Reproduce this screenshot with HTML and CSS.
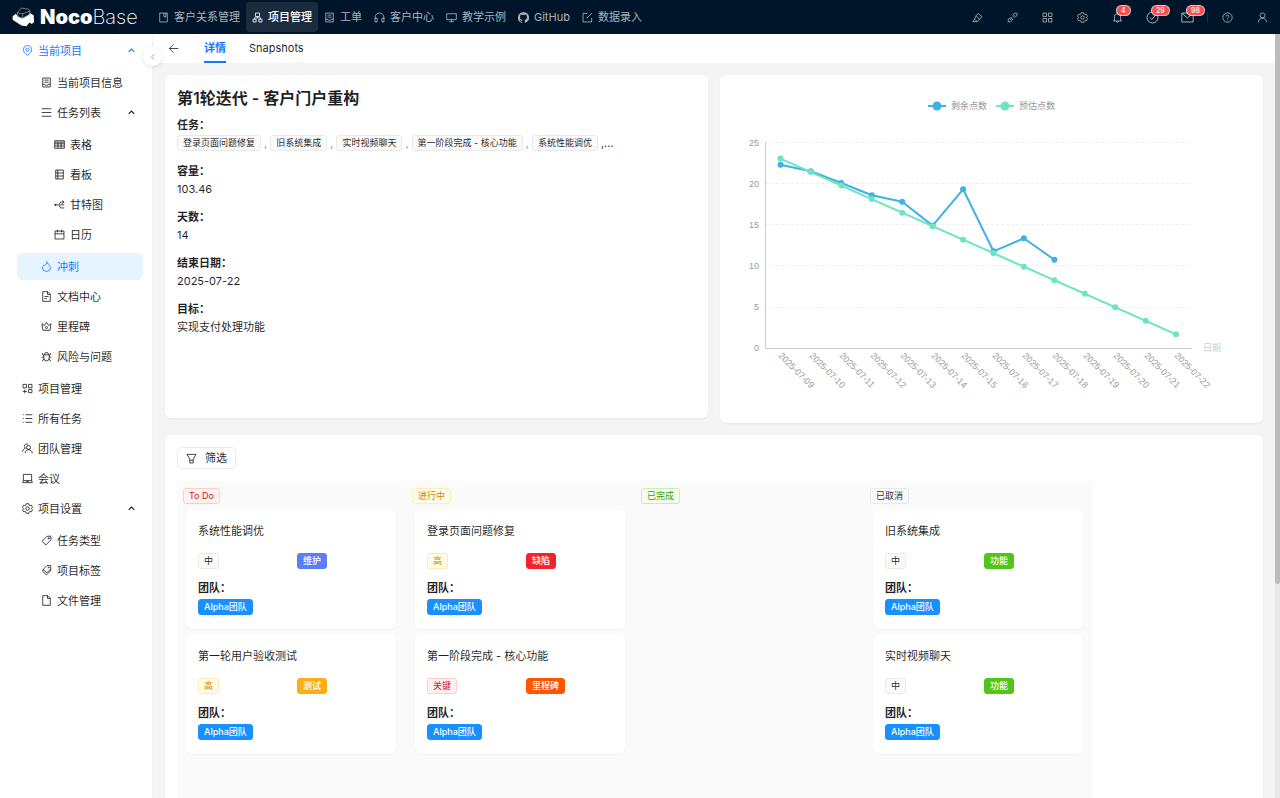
FILE: index.html
```html
<!DOCTYPE html>
<html lang="zh-CN">
<head>
<meta charset="utf-8">
<title>NocoBase</title>
<link rel="stylesheet" href="styles.css">
</head>
<body>
<svg class="sprite" aria-hidden="true">
  <symbol id="i-book" viewBox="0 0 16 16"><path d="M2.500 1.500h11v13h-11zM8.500 1.500v5.500h3v-5.500"/></symbol>
  <symbol id="i-tree" viewBox="0 0 16 16"><path d="M5 1.500h6v5H5zM1.500 10.500h4.500v4H1.500zM10 10.500h4.500v4H10zM8 6.500v2M3.800 10.500v-2h8.400v2"/></symbol>
  <symbol id="i-form" viewBox="0 0 16 16"><path d="M2.500 1.500h11v13h-11zM5 4.500h6M5 7.500h6M2.500 10.500h3l1 1.500h3l1-1.500h3"/></symbol>
  <symbol id="i-headset" viewBox="0 0 16 16"><path d="M1.500 10V8a6.500 6.500 0 0 1 13 0v2M1.500 9h3v5.500h-3zM14.500 9h-3v5.500h3z"/></symbol>
  <symbol id="i-screen" viewBox="0 0 16 16"><path d="M1 2.500h14v8.500H1zM8 11v3M4.500 14h7"/></symbol>
  <symbol id="i-github" viewBox="0 0 16 16"><path class="solid" d="M8 .2a8 8 0 0 0-2.500 15.600c.4.100.5-.2.500-.4v-1.400c-2.200.5-2.700-1-2.700-1-.4-.9-.9-1.200-.9-1.200-.7-.5.1-.5.1-.5.8.1 1.200.8 1.200.8.7 1.200 1.900.9 2.300.7.1-.5.3-.9.5-1.100-1.800-.2-3.600-.9-3.600-4 0-.9.300-1.600.8-2.100-.1-.2-.4-1 .1-2.100 0 0 .7-.2 2.200.8a7.500 7.500 0 0 1 4 0c1.500-1 2.200-.8 2.200-.8.4 1.100.2 1.900.1 2.100.5.6.8 1.300.8 2.100 0 3.100-1.900 3.800-3.700 4 .3.300.6.800.6 1.500v2.200c0 .2.100.5.600.4A8 8 0 0 0 8 .2z"/></symbol>
  <symbol id="i-edit" viewBox="0 0 16 16"><path d="M8 2H1.500v12.500H14V8.500M14.500 1.500L8 8v.5H6.500"/></symbol>
  <symbol id="i-brush" viewBox="0 0 16 16"><path d="M9 2l5.500 5L11 10.500c-1 2-2 3-4 3.500H1l3-3.500c.5-2 1-3.500 2-5zM6 5.500l5 5M4 10.500L7.500 14"/></symbol>
  <symbol id="i-plug" viewBox="0 0 16 16"><path d="M9 3.500l3.500 3.500c2-1 2.500-3 1.500-4.500s-3.500-1-5 1zM3.500 9L7 12.500c-1 2-3 2.500-4.500 1.500s-1-3.500 1-5zM13.700 2.300L15 1M2.300 13.700L1 15M5.500 9.500L7 8M7.500 11.500L9 10M7.500 5L11 8.500M5 7.500L8.500 11"/></symbol>
  <symbol id="i-grid" viewBox="0 0 16 16"><path d="M1.500 1.500h5v5h-5zM9.500 1.500h5v5h-5zM1.500 9.500h5v5h-5zM9.500 9.500h5v5h-5z"/></symbol>
  <symbol id="i-gear" viewBox="0 0 16 16"><path d="M6.300 1h3.400l.6 2 1.200.7 2.100-.5 1.700 2.900L13.800 7.600v.9l1.500 1.500-1.700 2.900-2.100-.5-1.200.7-.6 2H6.300l-.6-2-1.200-.7-2.100.5L.7 10l1.500-1.500v-.9L.7 6.100l1.700-2.900 2.100.5 1.200-.7z"/><circle cx="8" cy="8" r="2.500"/></symbol>
  <symbol id="i-bell" viewBox="0 0 16 16"><path d="M1.500 13h13M3.500 13V7a4.500 4.500 0 0 1 9 0v6M8 2.500V1M6.500 13.500a1.500 1.500 0 0 0 3 0"/></symbol>
  <symbol id="i-check" viewBox="0 0 16 16"><circle cx="8" cy="8" r="6.800"/><path d="M5 8l2.200 2.500L11.500 5.500"/></symbol>
  <symbol id="i-mail" viewBox="0 0 16 16"><path d="M1 2.500h14v11H1zM1.500 3L8 8.500 14.500 3"/></symbol>
  <symbol id="i-help" viewBox="0 0 16 16"><circle cx="8" cy="8" r="6.800"/><path d="M6 6.500C6 3.800 10 3.800 10 6.400 10 8 8 8 8 9.700M8 11v1.200"/></symbol>
  <symbol id="i-user" viewBox="0 0 16 16"><circle cx="8" cy="5" r="3.600"/><path d="M2 15c0-8 12-8 12 0"/></symbol>
  <symbol id="i-pin" viewBox="0 0 16 16"><path d="M8 15C4 12 2 9.500 2 6.700a6 6 0 0 1 12 0C14 9.500 12 12 8 15z"/><circle cx="8" cy="6.800" r="2.300"/></symbol>
  <symbol id="i-bars" viewBox="0 0 16 16"><path d="M1 2.500h14M1 8h14M1 13.500h14"/></symbol>
  <symbol id="i-table" viewBox="0 0 16 16"><path d="M1 2.500h14v11H1zM1 4.500h14M1 7h14M1 10.200h14M5.700 5v8.500M10.300 5v8.500"/></symbol>
  <symbol id="i-board" viewBox="0 0 16 16"><path d="M2.500 1.500h11v13h-11zM2.500 5.800h11M2.500 10.200h11M5.500 1.500v13"/></symbol>
  <symbol id="i-gantt" viewBox="0 0 16 16"><path d="M1 8.500h5M15 8.500H8M15 13H9.500L7 8.500 9.500 4.500H14M12 2l2.500 2.500L12 7"/><circle class="solid" cx="2" cy="8.500" r="1.400"/></symbol>
  <symbol id="i-calendar" viewBox="0 0 16 16"><path d="M1.500 3h13v11.500h-13zM1.500 7h13M5 1v4M11 1v4"/></symbol>
  <symbol id="i-fire" viewBox="0 0 16 16"><path d="M8 1c.5 2.500-1 4-2.500 5.500L4.500 5.500C3 7 2.200 8.500 2.200 9.800a5.800 5.300 0 0 0 11.600 0C13.800 7 11.500 6 10.500 4.500 10 3.500 9.500 2 8 1z"/></symbol>
  <symbol id="i-doc" viewBox="0 0 16 16"><path d="M2.500 1h7.500l3.500 3.500V15h-11zM9.500 1v4h4M5 8h6M5 11h3.500"/></symbol>
  <symbol id="i-crown" viewBox="0 0 16 16"><path d="M1.500 4L5 6.500 8 2l3 4.500L14.500 4l-1.300 9.500H2.800z"/><circle cx="8" cy="9.500" r="1.500"/></symbol>
  <symbol id="i-bug" viewBox="0 0 16 16"><path d="M4 5.500h8V10a4 4.500 0 0 1-8 0zM5 5.500a3 3.500 0 0 1 6 0M1 9h3M12 9h3M4 6.500L2 5V3M12 6.500L14 5V3M4.500 11.500L2.500 13v2M11.500 11.500l2 1.500v2"/></symbol>
  <symbol id="i-addgrid" viewBox="0 0 16 16"><path d="M1.500 2h5v5h-5zM9.500 2h5v5h-5zM9.500 9.500h5v4.500h-5zM4 9.500V15M1 12.200h6"/></symbol>
  <symbol id="i-list" viewBox="0 0 16 16"><path d="M5 2.500h10M5 8h10M5 13.500h10M1 2.500h1.500M1 8h1.500M1 13.500h1.500"/></symbol>
  <symbol id="i-team" viewBox="0 0 16 16"><circle cx="9.500" cy="6.500" r="2.900"/><path d="M4.500 15c0-7 10-7 10.500 0M6.500 7.800A3.200 3.200 0 1 1 9 2.500M1 12.500c0-2.500 1.500-4 3.500-4.700"/></symbol>
  <symbol id="i-laptop" viewBox="0 0 16 16"><path d="M2 2h12v9H2zM2 11l-1 3h14l-1-3M6 12.500h4"/></symbol>
  <symbol id="i-tag" viewBox="0 0 16 16"><path d="M8.500 2l5.700-.5.300 5.500-7.500 7.500L1.500 9z"/><circle cx="11.300" cy="4.800" r="1"/></symbol>
  <symbol id="i-tags" viewBox="0 0 16 16"><path d="M8.500 1l5.500-.3.300 5L8.500 11.500 3 6.500zM3 6.500L2.500 9.500l5.500 5 6-6V5.700"/><circle cx="11.300" cy="3.800" r=".7"/></symbol>
  <symbol id="i-file" viewBox="0 0 16 16"><path d="M2.500 1h7.500l3.500 3.500V15h-11zM9.500 1v4h4"/></symbol>
  <symbol id="i-up" viewBox="0 0 16 16"><path d="M3 10.500L8 5.500l5 5"/></symbol>
  <symbol id="i-left" viewBox="0 0 16 16"><path d="M10.500 2.500L5 8l5.500 5.500"/></symbol>
  <symbol id="i-back" viewBox="0 0 16 16"><path d="M15 8H2M8 2L2 8l6 6"/></symbol>
  <symbol id="i-filter" viewBox="0 0 16 16"><path d="M1.500 2h13L10.500 9v5.500h-5V9zM5.500 10.500h5"/></symbol>
</svg>

<header class="topbar">
  <a class="logo" href="#">
    <svg class="logo-mark" viewBox="34 20 70 60" aria-hidden="true">
      <path class="logo-body" d="M36 48l10-8 6 9 14 5 18-9 4-7 12 7 1 20-7 6-7-4-9 11-15-2-17-11-10-7z"/>
      <path class="logo-line" d="M52 48l-2-11 12-14 22 3 5 6-2 10-22 12zM50 37l17 3 22-8M67 40l-2 14"/>
    </svg>
    <span class="logo-text"><b>Noco</b>Base</span>
  </a>
  <nav class="topnav">
    <a href="#"><svg class="ic"><use href="#i-book"/></svg>客户关系管理</a>
    <a href="#" class="active"><svg class="ic"><use href="#i-tree"/></svg>项目管理</a>
    <a href="#"><svg class="ic"><use href="#i-form"/></svg>工单</a>
    <a href="#"><svg class="ic"><use href="#i-headset"/></svg>客户中心</a>
    <a href="#"><svg class="ic"><use href="#i-screen"/></svg>教学示例</a>
    <a href="#"><svg class="ic"><use href="#i-github"/></svg>GitHub</a>
    <a href="#"><svg class="ic"><use href="#i-edit"/></svg>数据录入</a>
  </nav>
  <div class="tools">
    <button type="button" aria-label="界面配置"><svg class="ic"><use href="#i-brush"/></svg></button>
    <button type="button" aria-label="插件"><svg class="ic"><use href="#i-plug"/></svg></button>
    <button type="button" aria-label="应用"><svg class="ic"><use href="#i-grid"/></svg></button>
    <button type="button" aria-label="设置"><svg class="ic"><use href="#i-gear"/></svg></button>
    <button type="button" aria-label="通知"><svg class="ic"><use href="#i-bell"/></svg><span class="badge">4</span></button>
    <button type="button" aria-label="待办"><svg class="ic big"><use href="#i-check"/></svg><span class="badge">29</span></button>
    <button type="button" aria-label="邮件"><svg class="ic big"><use href="#i-mail"/></svg><span class="badge">98</span></button>
    <span class="divider"></span>
    <button type="button" aria-label="帮助"><svg class="ic"><use href="#i-help"/></svg></button>
    <button type="button" aria-label="用户"><svg class="ic"><use href="#i-user"/></svg></button>
  </div>
</header>

<div class="shell">
  <aside class="sidebar">
    <ul class="menu">
      <li><a href="#" class="current"><svg class="ic"><use href="#i-pin"/></svg>当前项目<svg class="ic chev"><use href="#i-up"/></svg></a>
        <ul class="menu level-1">
          <li><a href="#"><svg class="ic"><use href="#i-form"/></svg>当前项目信息</a></li>
          <li><a href="#"><svg class="ic"><use href="#i-bars"/></svg>任务列表<svg class="ic chev"><use href="#i-up"/></svg></a>
            <ul class="menu level-2">
              <li><a href="#"><svg class="ic"><use href="#i-table"/></svg>表格</a></li>
              <li><a href="#"><svg class="ic"><use href="#i-board"/></svg>看板</a></li>
              <li><a href="#"><svg class="ic"><use href="#i-gantt"/></svg>甘特图</a></li>
              <li><a href="#"><svg class="ic"><use href="#i-calendar"/></svg>日历</a></li>
            </ul>
          </li>
          <li><a href="#" class="current selected"><svg class="ic"><use href="#i-fire"/></svg>冲刺</a></li>
          <li><a href="#"><svg class="ic"><use href="#i-doc"/></svg>文档中心</a></li>
          <li><a href="#"><svg class="ic"><use href="#i-crown"/></svg>里程碑</a></li>
          <li><a href="#"><svg class="ic"><use href="#i-bug"/></svg>风险与问题</a></li>
        </ul>
      </li>
      <li><a href="#"><svg class="ic"><use href="#i-addgrid"/></svg>项目管理</a></li>
      <li><a href="#"><svg class="ic"><use href="#i-list"/></svg>所有任务</a></li>
      <li><a href="#"><svg class="ic"><use href="#i-team"/></svg>团队管理</a></li>
      <li><a href="#"><svg class="ic"><use href="#i-laptop"/></svg>会议</a></li>
      <li><a href="#"><svg class="ic"><use href="#i-gear"/></svg>项目设置<svg class="ic chev"><use href="#i-up"/></svg></a>
        <ul class="menu level-1">
          <li><a href="#"><svg class="ic"><use href="#i-tag"/></svg>任务类型</a></li>
          <li><a href="#"><svg class="ic"><use href="#i-tags"/></svg>项目标签</a></li>
          <li><a href="#"><svg class="ic"><use href="#i-file"/></svg>文件管理</a></li>
        </ul>
      </li>
    </ul>
    <button type="button" class="collapse" aria-label="收起菜单"><svg class="ic"><use href="#i-left"/></svg></button>
  </aside>

  <main class="main">
    <div class="pagehead">
      <a href="#" class="back" aria-label="返回"><svg class="ic"><use href="#i-back"/></svg></a>
      <a href="#" class="tab on">详情</a>
      <a href="#" class="tab">Snapshots</a>
    </div>

    <div class="content">
      <div class="row">
        <section class="card detail">
          <h1>第1轮迭代 - 客户门户重构</h1>
          <dl>
            <dt>任务：</dt>
            <dd class="taglist"><span class="tag">登录页面问题修复</span><i>,</i><span class="tag">旧系统集成</span><i>,</i><span class="tag">实时视频聊天</span><i>,</i><span class="tag">第一阶段完成 - 核心功能</span><i>,</i><span class="tag">系统性能调优</span><i class="more">,...</i></dd>
            <dt>容量：</dt><dd>103.46</dd>
            <dt>天数：</dt><dd>14</dd>
            <dt>结束日期：</dt><dd>2025-07-22</dd>
            <dt>目标：</dt><dd>实现支付处理功能</dd>
          </dl>
        </section>

        <section class="card chart">
          <svg viewBox="0 0 543 348" role="img" aria-label="燃尽图">
            <g class="remain"><path d="M208 31h18"/><circle cx="217" cy="31" r="4.500"/></g>
            <text x="231" y="34">剩余点数</text>
            <g class="plan"><path d="M276 31h18"/><circle cx="285" cy="31" r="4.500"/></g>
            <text x="299" y="34">预估点数</text>
            <path class="split" d="M46 67.500h426M46 108.500h426M46 149.500h426M46 190.500h426M46 232.500h426"/>
            <path class="axis" d="M45.500 67v206.500H472"/>
            <g class="ylab">
              <text x="39" y="71">25</text><text x="39" y="112">20</text><text x="39" y="153">15</text>
              <text x="39" y="194">10</text><text x="39" y="235">5</text><text x="39" y="276">0</text>
            </g>
            <text class="xname" x="483" y="276">日期</text>
            <g class="xlab">
              <text transform="translate(60 279) rotate(45)">2025-07-09</text>
              <text transform="translate(91 279) rotate(45)">2025-07-10</text>
              <text transform="translate(121 279) rotate(45)">2025-07-11</text>
              <text transform="translate(152 279) rotate(45)">2025-07-12</text>
              <text transform="translate(182 279) rotate(45)">2025-07-13</text>
              <text transform="translate(213 279) rotate(45)">2025-07-14</text>
              <text transform="translate(243 279) rotate(45)">2025-07-15</text>
              <text transform="translate(274 279) rotate(45)">2025-07-16</text>
              <text transform="translate(304 279) rotate(45)">2025-07-17</text>
              <text transform="translate(334 279) rotate(45)">2025-07-18</text>
              <text transform="translate(365 279) rotate(45)">2025-07-19</text>
              <text transform="translate(395 279) rotate(45)">2025-07-20</text>
              <text transform="translate(426 279) rotate(45)">2025-07-21</text>
              <text transform="translate(456 279) rotate(45)">2025-07-22</text>
            </g>
            <g class="remain">
              <path d="M60.500 89.700L90.900 96.300 121.300 108 151.800 120.300 182.200 126.700 212.600 150.600 243.100 114.300 273.500 176.300 303.900 163.300 334.400 184.800"/>
              <circle cx="60.500" cy="89.700" r="3"/><circle cx="90.900" cy="96.300" r="3"/><circle cx="121.300" cy="108" r="3"/><circle cx="151.800" cy="120.300" r="3"/><circle cx="182.200" cy="126.700" r="3"/><circle cx="212.600" cy="150.600" r="3"/><circle cx="243.100" cy="114.300" r="3"/><circle cx="273.500" cy="176.300" r="3"/><circle cx="303.900" cy="163.300" r="3"/><circle cx="334.400" cy="184.800" r="3"/>
            </g>
            <g class="plan">
              <path d="M60.500 83.600L456.100 259.300"/>
              <circle cx="60.500" cy="83.600" r="3"/><circle cx="90.900" cy="97.100" r="3"/><circle cx="121.300" cy="110.600" r="3"/><circle cx="151.800" cy="124.100" r="3"/><circle cx="182.200" cy="137.700" r="3"/><circle cx="212.600" cy="151.200" r="3"/><circle cx="243.100" cy="164.700" r="3"/><circle cx="273.500" cy="178.200" r="3"/><circle cx="303.900" cy="191.700" r="3"/><circle cx="334.400" cy="205.300" r="3"/><circle cx="364.800" cy="218.800" r="3"/><circle cx="395.200" cy="232.300" r="3"/><circle cx="425.700" cy="245.800" r="3"/><circle cx="456.100" cy="259.300" r="3"/>
            </g>
          </svg>
        </section>
      </div>

      <section class="card tasks">
        <button type="button" class="filter"><svg class="ic"><use href="#i-filter"/></svg>筛选</button>
        <div class="board">
          <div class="column">
            <span class="tag red">To Do</span>
            <article class="task">
              <h2>系统性能调优</h2>
              <div class="pair"><span class="tag">中</span><span class="tag fill indigo">维护</span></div>
              <h3>团队：</h3><span class="tag fill blue">Alpha团队</span>
            </article>
            <article class="task">
              <h2>第一轮用户验收测试</h2>
              <div class="pair"><span class="tag gold">高</span><span class="tag fill amber">测试</span></div>
              <h3>团队：</h3><span class="tag fill blue">Alpha团队</span>
            </article>
          </div>
          <div class="column">
            <span class="tag gold">进行中</span>
            <article class="task">
              <h2>登录页面问题修复</h2>
              <div class="pair"><span class="tag gold">高</span><span class="tag fill crimson">缺陷</span></div>
              <h3>团队：</h3><span class="tag fill blue">Alpha团队</span>
            </article>
            <article class="task">
              <h2>第一阶段完成 - 核心功能</h2>
              <div class="pair"><span class="tag red">关键</span><span class="tag fill orange">里程碑</span></div>
              <h3>团队：</h3><span class="tag fill blue">Alpha团队</span>
            </article>
          </div>
          <div class="column">
            <span class="tag green">已完成</span>
          </div>
          <div class="column">
            <span class="tag">已取消</span>
            <article class="task">
              <h2>旧系统集成</h2>
              <div class="pair"><span class="tag">中</span><span class="tag fill lime">功能</span></div>
              <h3>团队：</h3><span class="tag fill blue">Alpha团队</span>
            </article>
            <article class="task">
              <h2>实时视频聊天</h2>
              <div class="pair"><span class="tag">中</span><span class="tag fill lime">功能</span></div>
              <h3>团队：</h3><span class="tag fill blue">Alpha团队</span>
            </article>
          </div>
        </div>
      </section>
    </div>
  </main>
  <div class="scrolltrack"><div class="scrollthumb"></div></div>
</div>
</body>
</html>
```

FILE: styles.css
```css
* { box-sizing: border-box; }

body {
  margin: 0;
  height: 100vh;
  display: flex;
  flex-direction: column;
  overflow: hidden;
  font: 11px/18px Inter, "Noto Sans CJK SC", sans-serif;
  color: rgba(0, 0, 0, 0.88);
  background: #f4f4f4;
}

a { color: inherit; text-decoration: none; }
button { font: inherit; color: inherit; cursor: pointer; }
h1, h2, h3, dl, dd, ul { margin: 0; padding: 0; }
ul { list-style: none; }

.sprite { display: none; }
.ic {
  width: 11px;
  height: 11px;
  flex: none;
  fill: none;
  stroke: currentColor;
  stroke-width: 1.2;
}
.ic.big { width: 13px; height: 13px; }
.solid { fill: currentColor; stroke: none; }

/* Top bar */
.topbar {
  flex: none;
  height: 34px;
  display: flex;
  align-items: center;
  background: #001529;
  color: rgba(255, 255, 255, 0.68);
}
.logo {
  width: 152px;
  padding-left: 12px;
  display: flex;
  align-items: center;
  gap: 5px;
  color: #fff;
}
.logo-mark { width: 23px; height: 20px; }
.logo-body { fill: #fff; }
.logo-line { fill: #001529; stroke: #a5adb5; stroke-width: 2; }
.logo-text { font-size: 20px; font-weight: 200; line-height: 34px; }
.logo-text b { font-weight: 900; }
.topnav { display: flex; align-items: center; }
.topnav a {
  height: 30px;
  padding: 0 6px;
  display: flex;
  align-items: center;
  gap: 5px;
  border-radius: 4px;
}
.topnav .active { color: #fff; font-weight: 500; background: rgba(255, 255, 255, 0.1); }
.tools { margin-left: auto; display: flex; align-items: center; }
.tools button {
  position: relative;
  width: 35px;
  height: 34px;
  padding: 0;
  border: 0;
  background: none;
  display: flex;
  align-items: center;
  justify-content: center;
}
.badge {
  position: absolute;
  top: 6px;
  left: 17px;
  height: 9px;
  padding: 0 4px;
  border-radius: 5px;
  background: #ff4d4f;
  box-shadow: 0 0 0 1px rgba(255, 255, 255, 0.8);
  color: #fff;
  font-size: 7px;
  font-weight: 500;
  line-height: 9px;
}
.divider { width: 1px; height: 10px; margin: 0 2px; background: rgba(255, 255, 255, 0.1); }

/* Sidebar */
.shell { flex: 1; min-height: 0; display: flex; }
.sidebar {
  position: relative;
  flex: none;
  width: 153px;
  padding: 3px 9px 0 17px;
  border-right: 1px solid #f2f2f2;
  background: #fff;
}
.menu { display: flex; flex-direction: column; gap: 3px; }
.menu .menu { margin: 5px 0 2px; }
.menu a {
  height: 27px;
  padding: 0 7px 0 5px;
  display: flex;
  align-items: center;
  gap: 5px;
  border-radius: 5px;
}
.level-1 a { padding-left: 24px; }
.level-2 a { padding-left: 37px; }
.menu .current { color: #1677ff; }
.menu .selected { background: #e6f4ff; }
.chev { width: 9px; height: 9px; margin-left: auto; stroke-width: 2; }
.collapse {
  position: absolute;
  top: 13px;
  right: -10px;
  z-index: 1;
  width: 19px;
  height: 19px;
  padding: 0;
  border: 0;
  border-radius: 50%;
  background: #fff;
  box-shadow: 0 1px 4px rgba(0, 0, 0, 0.12);
  color: rgba(0, 0, 0, 0.35);
  display: flex;
  align-items: center;
  justify-content: center;
}
.collapse .ic { width: 8px; height: 8px; stroke-width: 2; }

/* Main column */
.main { flex: 1; min-width: 0; overflow: hidden; }
.pagehead {
  height: 29px;
  padding-left: 15px;
  display: flex;
  align-items: stretch;
  background: #fff;
}
.back { width: 36px; display: flex; align-items: center; }
.tab { margin-right: 23px; border-bottom: 2px solid transparent; line-height: 29px; }
.tab.on { color: #1677ff; font-weight: 600; border-color: #1677ff; }
.content { padding: 12px; display: flex; flex-direction: column; gap: 12px; }
.row { display: grid; grid-template-columns: 1fr 1fr; gap: 12px; align-items: start; }
.card { border-radius: 6px; background: #fff; box-shadow: 0 1px 2px rgba(0, 0, 0, 0.06); }

.detail { min-height: 343px; padding: 12px; }
.detail h1 { font-size: 16px; font-weight: 600; line-height: 22px; }
.detail dl { margin-top: 7px; }
.detail dt { font-weight: 600; }
.detail dd { margin-bottom: 10px; }
.detail .taglist { height: 18px; display: flex; align-items: center; gap: 3px; white-space: nowrap; }
.taglist i { font-style: normal; color: #999; }
.taglist .more { color: inherit; }

.tag {
  height: 16px;
  padding: 0 5px;
  display: inline-flex;
  align-items: center;
  justify-self: start;
  align-self: flex-start;
  border: 1px solid #e9e9e9;
  border-radius: 3px;
  background: #fafafa;
  font-size: 9px;
  line-height: 14px;
}
.taglist .tag { align-self: center; }
.red { color: #cf1322; background: #fff1f0; border-color: #ffccc7; }
.gold { color: #d48806; background: #fffbe6; border-color: #ffecb0; }
.green { color: #389e0d; background: #f6ffed; border-color: #c8efae; }
.fill { color: #fff; font-weight: 500; }
.indigo { background: #597ef7; border-color: #597ef7; }
.amber { background: #faad14; border-color: #faad14; }
.crimson { background: #f5222d; border-color: #f5222d; }
.orange { background: #ff5500; border-color: #ff5500; }
.lime { background: #52c41a; border-color: #52c41a; }
.blue { background: #1890ff; border-color: #1890ff; }

/* Burndown chart */
.chart svg { display: block; width: 100%; }
.chart text { font: 9px "Liberation Sans", "Noto Sans CJK SC", sans-serif; fill: #999; }
.chart path { fill: none; }
.split { stroke: #eee; stroke-dasharray: 3 2; }
.axis { stroke: #ccc; }
.ylab text { text-anchor: end; }
.xlab text { dominant-baseline: central; }
.chart .xname { fill: #ccc; }
.remain { fill: #3fb1e3; stroke: #3fb1e3; }
.plan { fill: #6be6c1; stroke: #6be6c1; }
.remain path, .plan path { stroke-width: 2; stroke-linejoin: round; }
.remain circle, .plan circle { stroke: none; }

/* Kanban */
.tasks { padding: 12px; }
.filter {
  height: 22px;
  padding: 0 8px;
  display: flex;
  align-items: center;
  gap: 8px;
  border: 1px solid #e9e9e9;
  border-radius: 5px;
  background: #fff;
}
.board {
  width: max-content;
  min-height: 400px;
  margin-top: 12px;
  display: grid;
  grid-template-columns: repeat(4, 229px);
  background: #fafafa;
}
.column { padding: 7px 6px; display: flex; flex-direction: column; gap: 6px; }
.task {
  width: 210px;
  margin-left: 3px;
  padding: 12px 12px 14px;
  display: flex;
  flex-direction: column;
  border-radius: 6px;
  background: #fff;
  box-shadow: 0 1px 2px rgba(0, 0, 0, 0.04);
}
.task h2 { font-size: 11px; font-weight: 400; line-height: 18px; }
.pair { margin: 13px 0 10px; display: grid; grid-template-columns: 1fr 1fr; gap: 12px; }
.task h3 { margin-bottom: 2px; font-size: 11px; font-weight: 600; line-height: 18px; }

/* Page scrollbar */
.scrolltrack { flex: none; width: 5px; background: #e9e9e9; }
.scrollthumb { height: 72%; border-radius: 0 0 3px 3px; background: #bcbcbc; }
```
